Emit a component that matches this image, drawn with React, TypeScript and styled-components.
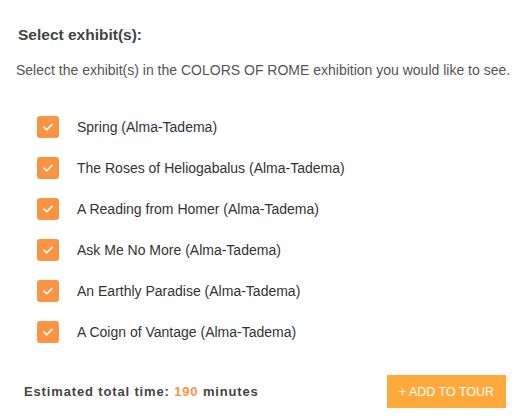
import React, { useState } from "react";
import styled, { createGlobalStyle } from "styled-components";

const Global = createGlobalStyle`
  body { margin: 0; background: #fff; font-family: "Liberation Sans", Arial, sans-serif; }
`;

const Page = styled.div`
  width: 521px;
  height: 419px;
  box-sizing: border-box;
  padding: 26px 0 0 0;
  display: flex;
  flex-direction: column;
`;

const Title = styled.h2`
  margin: 0 0 0 18px;
  font-size: 15.5px;
  font-weight: bold;
  color: #444;
  line-height: 18px;
`;

const Desc = styled.p`
  margin: 18px 0 0 16px;
  font-size: 14px;
  color: #555;
  line-height: 16px;
  white-space: nowrap;
`;

const List = styled.ul`
  list-style: none;
  margin: 38px 0 0 37px;
  padding: 0;
  display: flex;
  flex-direction: column;
  gap: 19px;
`;

const Row = styled.li`
  display: flex;
  align-items: center;
  height: 22px;
  cursor: pointer;
`;

const Box = styled.span<{ $on: boolean }>`
  width: 22px;
  height: 22px;
  border-radius: 3px;
  background: ${(p) => (p.$on ? "#fa9342" : "#fff")};
  border: ${(p) => (p.$on ? "none" : "1px solid #ccc")};
  box-sizing: border-box;
  display: flex;
  align-items: center;
  justify-content: center;
  flex-shrink: 0;
`;

const Label = styled.span`
  margin-left: 18px;
  font-size: 14px;
  color: #333;
`;

const Footer = styled.div`
  margin-top: 32px;
  display: flex;
  align-items: center;
  justify-content: space-between;
  padding: 0 15px 0 24px;
`;

const Total = styled.div`
  font-size: 13px;
  font-weight: bold;
  color: #444;
  letter-spacing: 0.85px;
`;

const Num = styled.span`
  color: #fa9342;
`;

const AddButton = styled.button`
  width: 119px;
  height: 33px;
  border: none;
  background: #ffa93a;
  color: #fff;
  font-family: "Liberation Sans", Arial, sans-serif;
  font-size: 12.5px;
  padding: 0;
  cursor: pointer;
`;

const items = [
  "Spring (Alma-Tadema)",
  "The Roses of Heliogabalus (Alma-Tadema)",
  "A Reading from Homer (Alma-Tadema)",
  "Ask Me No More (Alma-Tadema)",
  "An Earthly Paradise (Alma-Tadema)",
  "A Coign of Vantage (Alma-Tadema)",
];

const Check = () => (
  <svg width="12" height="10" viewBox="0 0 12 10">
    <path d="M2 5.2 L4.8 7.8 L10 2.4" fill="none" stroke="#fff" strokeWidth="1.6" strokeLinecap="round" strokeLinejoin="round" />
  </svg>
);

export default function App() {
  const [sel, setSel] = useState(items.map(() => true));
  return (
    <>
      <Global />
      <Page>
        <Title>Select exhibit(s):</Title>
        <Desc>Select the exhibit(s) in the COLORS OF ROME exhibition you would like to see.</Desc>
        <List>
          {items.map((t, i) => (
            <Row key={t} onClick={() => setSel((s) => s.map((v, j) => (j === i ? !v : v)))}>
              <Box $on={sel[i]}>{sel[i] && <Check />}</Box>
              <Label>{t}</Label>
            </Row>
          ))}
        </List>
        <Footer>
          <Total>
            Estimated total time: <Num>190</Num> minutes
          </Total>
          <AddButton>+ ADD TO TOUR</AddButton>
        </Footer>
      </Page>
    </>
  );
}
